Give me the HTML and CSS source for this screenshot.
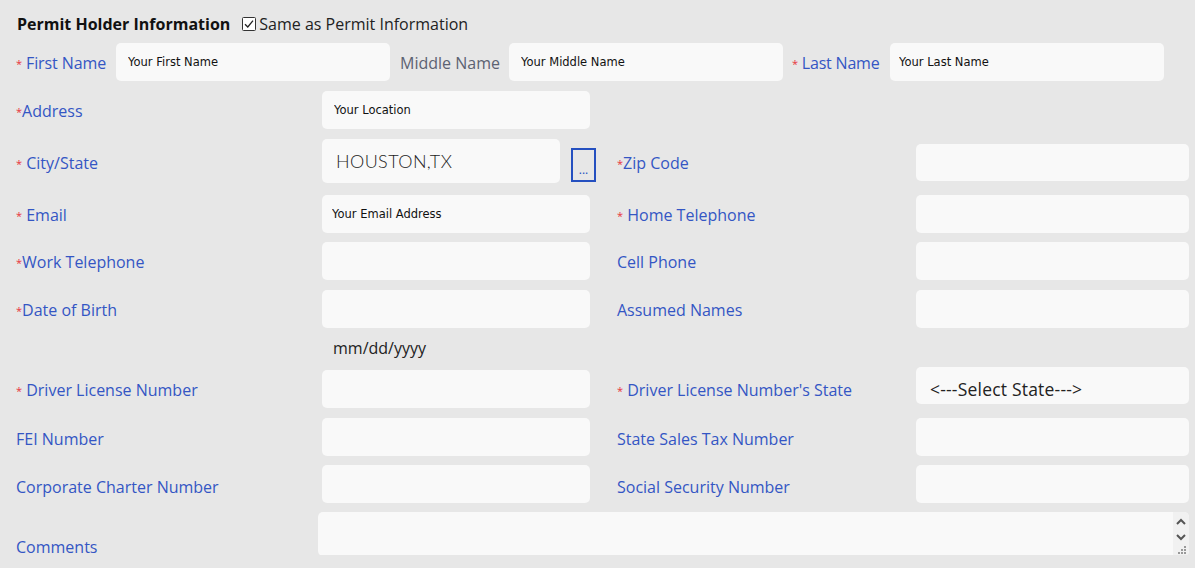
FILE: index.html
```html
<!DOCTYPE html>
<html>
<head>
<meta charset="utf-8">
<link rel="stylesheet" href="styles.css">
</head>
<body>
<div class="page">
  <div class="head">
    <span class="title">Permit Holder Information</span>
    <span class="chk"><svg width="14" height="14" viewBox="0 0 14 14"><rect x="0.5" y="0.5" width="13" height="13" rx="1" fill="#fff" stroke="#333"/><path d="M3 7.2 L5.8 10 L11 3.6" fill="none" stroke="#222" stroke-width="1.3"/></svg></span>
    <span class="same">Same as Permit Information</span>
  </div>

  <div class="names">
    <label class="lbl l-first"><span class="req">*</span> First Name</label>
    <input class="inp n-inp" placeholder="Your First Name">
    <label class="lbl gray l-mid">Middle Name</label>
    <input class="inp n-inp" placeholder="Your Middle Name">
    <label class="lbl l-last"><span class="req">*</span> Last Name</label>
    <input class="inp n-inp n-last" placeholder="Your Last Name">
  </div>

  <div class="form">
    <label class="lbl c1"><span class="req">*</span>Address</label>
    <input class="inp c2 ph-addr" placeholder="Your Location">

    <label class="lbl c1"><span class="req">*</span> City/State</label>
    <div class="c2 city-wrap">
      <div class="inp city">HOUSTON,TX</div>
      <button class="dots">...</button>
    </div>
    <label class="lbl c4"><span class="req">*</span>Zip Code</label>
    <input class="inp c5 zip">

    <label class="lbl c1"><span class="req">*</span> Email</label>
    <input class="inp c2 ph-mail" placeholder="Your Email Address">
    <label class="lbl c4"><span class="req">*</span> Home Telephone</label>
    <input class="inp c5">

    <label class="lbl c1"><span class="req">*</span>Work Telephone</label>
    <input class="inp c2">
    <label class="lbl c4">Cell Phone</label>
    <input class="inp c5">

    <label class="lbl c1"><span class="req">*</span>Date of Birth</label>
    <input class="inp c2">
    <label class="lbl c4">Assumed Names</label>
    <input class="inp c5">

    <div class="c2 hint">mm/dd/yyyy</div>

    <label class="lbl c1"><span class="req">*</span> Driver License Number</label>
    <input class="inp c2">
    <label class="lbl c4"><span class="req">*</span> Driver License Number's State</label>
    <div class="inp c5 select"><span class="sel-text">&lt;---Select State---&gt;</span></div>

    <label class="lbl c1 low">FEI Number</label>
    <input class="inp c2">
    <label class="lbl c4 low">State Sales Tax Number</label>
    <input class="inp c5">

    <label class="lbl c1 low2">Corporate Charter Number</label>
    <input class="inp c2">
    <label class="lbl c4 low2">Social Security Number</label>
    <input class="inp c5">

    <label class="lbl c1 bottom">Comments</label>
    <div class="comments">
      <div class="ta"></div>
      <div class="sbar">
        <svg class="arrow" width="16" height="14" viewBox="0 0 16 14"><path d="M4 9 L8 5 L12 9" fill="none" stroke="#555" stroke-width="2"/></svg>
        <svg class="arrow" width="16" height="14" viewBox="0 0 16 14"><path d="M4 5 L8 9 L12 5" fill="none" stroke="#555" stroke-width="2"/></svg>
        <svg class="grip" width="16" height="10" viewBox="0 0 16 10"><g fill="#999"><rect x="11" y="2" width="2" height="2"/><rect x="8" y="5" width="2" height="2"/><rect x="11" y="5" width="2" height="2"/><rect x="5" y="8" width="2" height="2"/><rect x="8" y="8" width="2" height="2"/><rect x="11" y="8" width="2" height="2"/></g></svg>
      </div>
    </div>
  </div>
</div>
</body>
</html>
```

FILE: styles.css
```css
html, body {
  margin: 0;
  padding: 0;
  background: #e7e7e7;
}
body {
  font-family: "Open Sans", "Liberation Sans", sans-serif;
  font-size: 16px;
  color: #222;
}
.page {
  padding: 13px 0 0 16px;
  width: 1179px;
}
.head {
  display: flex;
  align-items: center;
  height: 22px;
  padding-left: 1px;
}
.title {
  font-weight: 700;
  color: #111;
}
.chk {
  display: flex;
  margin-left: 12px;
  margin-right: 3px;
}
.same {
  color: #222;
}
.names {
  display: flex;
  align-items: center;
  margin-top: 8px;
  height: 38px;
}
.lbl {
  color: #3456c4;
  font-size: 16px;
  white-space: nowrap;
  padding-top: 2px;
}
.lbl.gray {
  color: #5c6272;
}
.req {
  color: #e8343c;
  font-size: 11px;
  vertical-align: 1px;
}
.l-first { width: 100px; letter-spacing: -0.1px; }
.l-mid { width: 109px; margin-left: 10px; }
.l-last { width: 98px; margin-left: 9px; letter-spacing: -0.2px; }
.inp {
  box-sizing: border-box;
  background: #f9f9f9;
  border: none;
  border-radius: 5px;
  outline: none;
  font-family: "DejaVu Sans", Verdana, sans-serif;
  font-size: 11.5px;
  color: #111;
  padding: 0 12px;
  height: 38px;
  margin: 0;
}
.inp::placeholder {
  color: #111;
  opacity: 1;
}
.n-inp {
  width: 274px;
  flex-shrink: 0;
}
.n-last { padding-left: 9px; }
.form {
  display: grid;
  grid-template-columns: 306px 268px 27px 299px 273px;
  grid-template-rows: 38px 46px 37px 38px 38px 22px 38px 38px 36px 43px;
  row-gap: 10px;
  margin-top: 10px;
  align-items: center;
}
.c1 { grid-column: 1; }
.c2 { grid-column: 2; }
.c4 { grid-column: 4; }
.c5 { grid-column: 5; }
.form .inp.c2, .form .inp.c5 { width: 100%; }
.low { padding-top: 4px; }
.low2 { padding-top: 5px; }
.ph-mail { padding-left: 10px; }
.city-wrap {
  display: flex;
  align-items: center;
  align-self: start;
  width: 274px;
}
.city {
  flex-shrink: 0;
  width: 238px;
  height: 44px;
  display: flex;
  align-items: center;
  padding-left: 14px;
  font-family: Lato, "Open Sans", sans-serif;
  font-weight: 300;
  letter-spacing: 0.4px;
  font-size: 18px;
  color: #1e1e1e;
}
.dots {
  flex-shrink: 0;
  box-sizing: border-box;
  width: 25px;
  height: 34px;
  margin-left: 11px;
  margin-top: 7px;
  border: 2px solid #2550c0;
  background: transparent;
  color: #2550c0;
  font-family: "Open Sans", sans-serif;
  font-size: 12px;
  padding: 10px 0 0 0;
  line-height: 10px;
}
.zip { height: 37px; }
.hint {
  padding-left: 11px;
  color: #222;
  font-size: 16px;
  margin-top: -3px;
}
.select {
  align-self: start;
  margin-top: -3px;
  height: 37px;
  padding-left: 14px;
  font-family: "Open Sans", sans-serif;
  font-size: 17.5px;
  letter-spacing: 0.2px;
  color: #222;
}
.sel-text {
  display: block;
  margin-top: 9px;
  height: 21px;
  line-height: 26px;
  overflow: hidden;
}
.bottom {
  align-self: end;
  margin-bottom: -3px;
}
.comments {
  grid-column: 2 / 6;
  margin-left: -4px;
  height: 44px;
  display: flex;
  background: #f9f9f9;
  border-radius: 5px;
  overflow: hidden;
  align-self: start;
}
.ta {
  flex: 1;
}
.sbar {
  width: 16px;
  background: #f1f1f1;
  display: flex;
  flex-direction: column;
  align-items: center;
  padding-top: 2px;
}
.arrow {
  display: block;
  margin-top: 1px;
}
.grip {
  display: block;
  margin-top: 0;
}
```
